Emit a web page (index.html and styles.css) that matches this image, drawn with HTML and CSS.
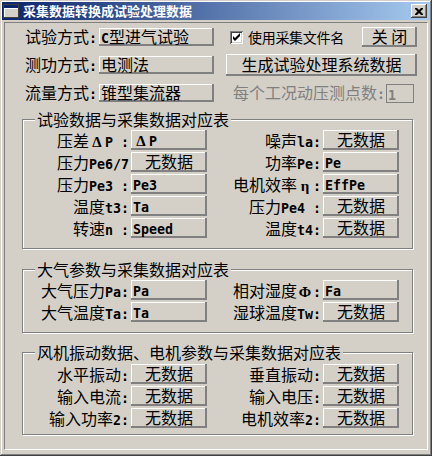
FILE: index.html
```html
<!DOCTYPE html>
<html lang="zh-CN">
<head>
  <meta charset="UTF-8">
  <title>采集数据转换成试验处理数据</title>
  <link rel="stylesheet" href="styles.css">
</head>
<body>
  <div class="window">
    <div class="titlebar">
      <svg class="app-icon" width="16" height="14" viewBox="0 0 16 14">
        <rect x="0.5" y="0.5" width="15" height="13" fill="#d4d0c8" stroke="#404040"/>
        <rect x="1" y="1" width="14" height="3" fill="#0a246a"/>
        <rect x="1" y="4" width="14" height="1" fill="#fff"/>
        <rect x="1" y="5" width="1" height="8" fill="#fff"/>
      </svg>
      <span class="title">采集数据转换成试验处理数据</span>
      <span class="close-btn">
        <svg width="8" height="7" viewBox="0 0 8 7">
          <path d="M0 0h2l2 2 2-2h2v1l-2.5 2.5L8 6v1H6L4 5 2 7H0V6l2.5-2.5L0 1z" fill="#000"/>
        </svg>
      </span>
    </div>

    <div class="client">
      <div class="top">
        <div class="top-row">
          <span class="lbl">试验方式<span class="en">:</span></span>
          <span class="btn"><span class="en">C</span>型进气试验</span>
          <div class="opt">
            <span class="check">
              <svg width="9" height="9" viewBox="0 0 9 9"><path d="M1 3v3l2 2 5-5V0L3 5z" fill="#000"/></svg>
            </span>
            <span class="check-label">使用采集文件名</span>
            <span class="btn c close">关 闭</span>
          </div>
        </div>
        <div class="top-row">
          <span class="lbl">测功方式<span class="en">:</span></span>
          <span class="btn">电测法</span>
          <span class="btn c make">生成试验处理系统数据</span>
        </div>
        <div class="top-row">
          <span class="lbl">流量方式<span class="en">:</span></span>
          <span class="btn">锥型集流器</span>
          <div class="opt off">
            <span class="off-label">每个工况动压测点数<span class="en">:</span></span>
            <span class="num"><span class="en">1</span></span>
          </div>
        </div>
      </div>

      <div class="grp g1">
        <span class="grp-title">试验数据与采集数据对应表</span>
        <div class="grp-grid">
          <span class="fl">压差<span class="gk">Δ</span><span class="en">P :</span></span>
          <span class="btn"><span class="gk">Δ</span><span class="en">P</span></span>
          <span class="fl">噪声<span class="en">la:</span></span>
          <span class="btn c">无数据</span>

          <span class="fl">压力<span class="en">Pe6/7</span></span>
          <span class="btn c">无数据</span>
          <span class="fl">功率<span class="en">Pe:</span></span>
          <span class="btn"><span class="en">Pe</span></span>

          <span class="fl">压力<span class="en">Pe3 :</span></span>
          <span class="btn"><span class="en">Pe3</span></span>
          <span class="fl">电机效率<span class="gk">η</span><span class="en">:</span></span>
          <span class="btn"><span class="en">EffPe</span></span>

          <span class="fl">温度<span class="en">t3:</span></span>
          <span class="btn"><span class="en">Ta</span></span>
          <span class="fl">压力<span class="en">Pe4 :</span></span>
          <span class="btn c">无数据</span>

          <span class="fl">转速<span class="en">n :</span></span>
          <span class="btn"><span class="en">Speed</span></span>
          <span class="fl">温度<span class="en">t4:</span></span>
          <span class="btn c">无数据</span>
        </div>
      </div>

      <div class="grp g2">
        <span class="grp-title">大气参数与采集数据对应表</span>
        <div class="grp-grid">
          <span class="fl">大气压力<span class="en">Pa:</span></span>
          <span class="btn"><span class="en">Pa</span></span>
          <span class="fl">相对湿度<span class="gk">Φ</span><span class="en">:</span></span>
          <span class="btn"><span class="en">Fa</span></span>

          <span class="fl">大气温度<span class="en">Ta:</span></span>
          <span class="btn"><span class="en">Ta</span></span>
          <span class="fl">湿球温度<span class="en">Tw:</span></span>
          <span class="btn c">无数据</span>
        </div>
      </div>

      <div class="grp g3">
        <span class="grp-title">风机振动数据、电机参数与采集数据对应表</span>
        <div class="grp-grid">
          <span class="fl">水平振动<span class="en">:</span></span>
          <span class="btn c">无数据</span>
          <span class="fl">垂直振动<span class="en">:</span></span>
          <span class="btn c">无数据</span>

          <span class="fl">输入电流<span class="en">:</span></span>
          <span class="btn c">无数据</span>
          <span class="fl">输入电压<span class="en">:</span></span>
          <span class="btn c">无数据</span>

          <span class="fl">输入功率<span class="en">2:</span></span>
          <span class="btn c">无数据</span>
          <span class="fl">电机效率<span class="en">2:</span></span>
          <span class="btn c">无数据</span>
        </div>
      </div>
    </div>
  </div>
</body>
</html>
```

FILE: styles.css
```css
body {
  margin: 0;
  background: #d4d0c8;
  font-family: "Noto Sans CJK SC", sans-serif;
  font-size: 16px;
  color: #000;
}

.window {
  width: 432px;
  height: 456px;
  box-sizing: border-box;
  padding: 2px;
  background: #d4d0c8;
  box-shadow: inset -1px -1px #404040, inset 1px 1px #d4d0c8,
              inset -2px -2px #808080, inset 2px 2px #fff;
}

.titlebar {
  height: 18px;
  display: flex;
  align-items: center;
  background: linear-gradient(to right, #0a246a, #a6caf0);
}

.app-icon {
  margin-left: 1px;
}

.title {
  margin-left: 4px;
  color: #fff;
  font-weight: bold;
  font-size: 13px;
  line-height: 18px;
}

.close-btn {
  margin-left: auto;
  margin-right: 3px;
  width: 16px;
  height: 14px;
  display: flex;
  align-items: center;
  justify-content: center;
  background: #d4d0c8;
  box-shadow: inset -1px -1px #404040, inset 1px 1px #fff, inset -2px -2px #808080;
}

.client {
  margin: 2px 0 0 2px;
  width: 424px;
  height: 428px;
  box-sizing: border-box;
  border: 1px solid;
  border-color: #808080 #fff #fff #808080;
}

/* top part */
.top-row {
  display: grid;
  grid-template-columns: 74px 115px 12px 191px;
  height: 28px;
  align-items: center;
  padding-left: 20px;
}

.top-row > :nth-child(3) {
  grid-column: 4;
}

.lbl {
  line-height: 18px;
  white-space: pre;
}

.top-row > .btn {
  height: 18px;
  line-height: 16px;
}

.opt {
  display: flex;
  align-items: center;
  padding-left: 4px;
  white-space: nowrap;
}

.check {
  width: 13px;
  height: 13px;
  flex: none;
  box-sizing: border-box;
  display: flex;
  align-items: center;
  justify-content: center;
  background: #fff;
  box-shadow: inset 1px 1px #808080, inset -1px -1px #fff,
              inset 2px 2px #404040, inset -2px -2px #d4d0c8;
}

.check-label {
  margin-left: 5px;
  font-size: 14px;
  line-height: 18px;
  letter-spacing: -0.3px;
}

.top-row .close {
  margin-left: auto;
  width: 55px;
  height: 20px;
  line-height: 18px;
}

.top-row .make {
  height: 22px;
  line-height: 20px;
}

.off {
  padding-left: 7px;
}

.off-label {
  color: #808080;
  line-height: 18px;
}

.num {
  margin-left: auto;
  margin-right: 3px;
  width: 28px;
  height: 19px;
  flex: none;
  box-sizing: border-box;
  border: 1px solid #808080;
  color: #808080;
  line-height: 17px;
  padding-left: 1px;
}

/* buttons */
.btn {
  box-sizing: border-box;
  height: 20px;
  line-height: 18px;
  padding-left: 2px;
  white-space: nowrap;
  background: #d4d0c8;
  box-shadow: inset -2px -2px #808080, inset 1px 1px #fff;
}

.btn.c {
  text-align: center;
  padding-left: 0;
}

.en {
  font-family: "DejaVu Sans Mono", monospace;
  font-weight: bold;
  font-size: 13.3px;
  white-space: pre;
}

.gk {
  display: inline-block;
  width: 16px;
  text-align: center;
  font-family: "Liberation Serif", serif;
  font-weight: bold;
  font-size: 15px;
}

/* group boxes */
.grp {
  position: relative;
  width: 391px;
  margin-left: 17px;
  box-sizing: border-box;
  border: 1px solid #808080;
  box-shadow: inset 1px 1px #fff, 1px 1px #fff;
}

.grp-title {
  position: absolute;
  top: -10px;
  left: 12px;
  padding: 0 2px;
  line-height: 18px;
  background: #d4d0c8;
}

.grp-grid {
  display: grid;
  grid-template-columns: 108px 76px 116px 76px;
  grid-auto-rows: 20px;
  row-gap: 2px;
}

.fl {
  text-align: right;
  padding-right: 2px;
  line-height: 20px;
  white-space: pre;
}

.g1 {
  margin-top: 12px;
  padding: 10px 0;
}

.g2 {
  margin-top: 20px;
  padding: 10px 0;
}

.g3 {
  margin-top: 19px;
  padding: 11px 0 6px;
}
```
